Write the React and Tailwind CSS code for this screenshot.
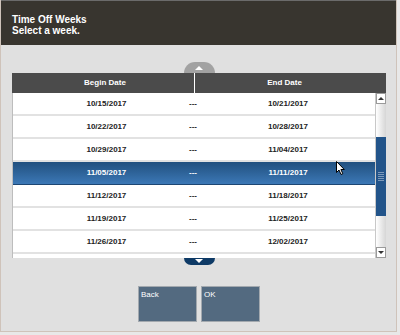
import React from 'react';

const WEEKS = [
  ['10/15/2017', '10/21/2017'],
  ['10/22/2017', '10/28/2017'],
  ['10/29/2017', '11/04/2017'],
  ['11/05/2017', '11/11/2017'],
  ['11/12/2017', '11/18/2017'],
  ['11/19/2017', '11/25/2017'],
  ['11/26/2017', '12/02/2017']
];

const SELECTED = 3;

const Cursor = () => (
  <svg width="10" height="15" viewBox="0 0 10 15" className="absolute left-[336px] top-[161px]">
    <path d="M0.5 0.5 L0.5 11.5 L3 9 L5 13.5 L6.8 12.7 L4.9 8.5 L8.3 8.5 Z" fill="#fff" stroke="#000" strokeWidth="1" strokeLinejoin="round" />
  </svg>
);

const Scrollbar = () => (
  <div className="w-[11px] h-full flex flex-col bg-gradient-to-r from-[#ffffff] to-[#d6d6d6] border-l border-[#c8c8c8]">
    <div className="h-[11px] bg-white border border-[#9a9a9a] flex items-center justify-center">
      <div className="w-0 h-0 border-l-[3px] border-r-[3px] border-b-[3px] border-l-transparent border-r-transparent border-b-[#333]" />
    </div>
    <div className="h-[33px]" />
    <div className="h-[79px] bg-[#22548a] flex flex-col items-center justify-center gap-[1px]">
      {[0, 1, 2, 3, 4].map(i => (
        <div key={i} className="w-[6px] h-[1px] bg-[#7d9abb]" />
      ))}
    </div>
    <div className="flex-1" />
    <div className="h-[11px] bg-white border border-[#9a9a9a] flex items-center justify-center">
      <div className="w-0 h-0 border-l-[3px] border-r-[3px] border-t-[3px] border-l-transparent border-r-transparent border-t-[#333]" />
    </div>
  </div>
);

export default function App() {
  return (
    <div className="relative w-[400px] h-[335px] bg-[#e8e8e8] overflow-hidden" style={{ fontFamily: '"Liberation Sans", Arial, sans-serif' }}>
      <div className="w-[397px] h-[332px] flex flex-col bg-[#e0e0e0] border-r border-b border-l border-[#cfc3ba]">
        {/* Title bar */}
        <div className="h-[45px] bg-[#38352f] border-t border-[#6b6b6b] pt-[13px] pl-[11px] text-white font-bold text-[10px] leading-[11px]">
          <div>Time Off Weeks</div>
          <div>Select a week.</div>
        </div>

        {/* Scroll up */}
        <div className="mt-[17px] ml-[11px] w-[374px] flex justify-center">
          <div className="w-[31px] h-[11px] rounded-t-full bg-[#a2a2a2] flex items-end justify-center pb-[3px]">
            <div className="w-0 h-0 border-l-[4px] border-r-[4px] border-b-[4px] border-l-transparent border-r-transparent border-b-white" />
          </div>
        </div>

        {/* Table */}
        <div className="ml-[11px] w-[374px]">
          <div className="h-[20px] flex bg-[#4b4b4b] text-white font-bold text-[8px]">
            <div className="w-[182px] flex items-center justify-center pl-[4px]">Begin Date</div>
            <div className="w-[1px] bg-white" />
            <div className="w-[179px] flex items-center justify-center">End Date</div>
          </div>
          <div className="h-[165px] flex bg-white border-l border-[#bdbdbd]">
            <div className="flex-1 overflow-hidden">
              {WEEKS.map(([a, b], i) => (
                <div
                  key={a}
                  className={
                    i === SELECTED
                      ? 'h-[23px] flex items-center text-[8px] font-bold text-white bg-gradient-to-b from-[#21507f] to-[#3c78b6] border-b border-[#1d4673]'
                      : 'h-[23px] flex items-center text-[8px] font-bold text-[#222] border-b-2 border-[#e2e2e2]'
                  }
                >
                  <div className="w-[175px] pl-[12px] text-center">{a}</div>
                  <div className="w-[10px] text-center">---</div>
                  <div className="flex-1 pl-[3px] text-center">{b}</div>
                </div>
              ))}
            </div>
            <Scrollbar />
          </div>
        </div>

        {/* Scroll down */}
        <div className="ml-[11px] w-[374px] flex justify-center">
          <div className="w-[31px] h-[7px] rounded-b-full bg-[#0e3a66] flex items-start justify-center pt-[1px]">
            <div className="w-0 h-0 border-l-[4px] border-r-[4px] border-t-[4px] border-l-transparent border-r-transparent border-t-white" />
          </div>
        </div>

        {/* Buttons */}
        <div className="mt-[21px] flex justify-center gap-[4px] pl-[1px]">
          <button className="w-[59px] h-[36px] bg-[#536a80] border border-[#a3a9af] text-white text-[8px] flex items-start pl-[2px] pt-[2px]">Back</button>
          <button className="w-[59px] h-[36px] bg-[#536a80] border border-[#a3a9af] text-white text-[8px] flex items-start pl-[2px] pt-[2px]">OK</button>
        </div>
      </div>
      <Cursor />
    </div>
  );
}
